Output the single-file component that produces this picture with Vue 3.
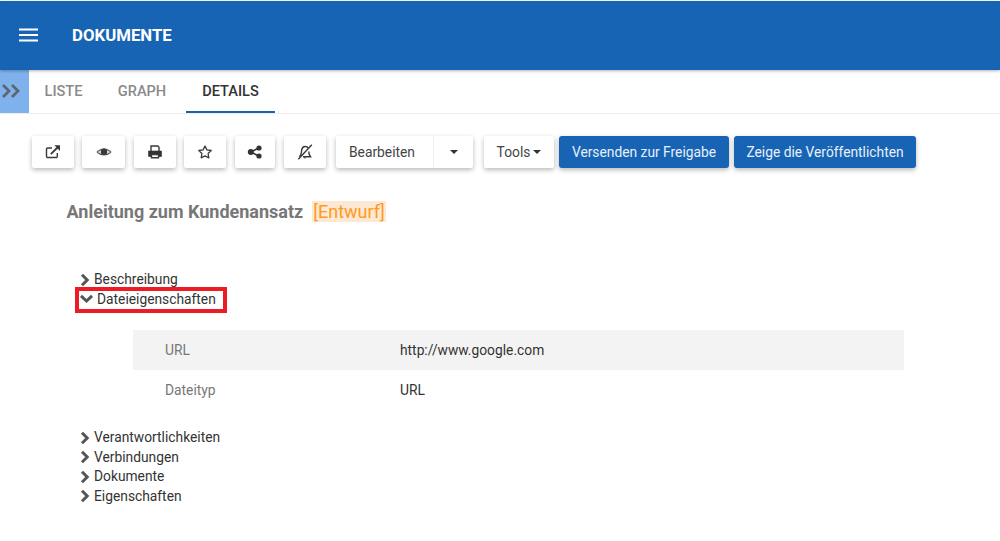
<template>
  <div class="page">
    <header class="appbar">
      <svg class="menu" width="20" height="14" viewBox="0 0 20 14"><path d="M0 1.500h19M0 7h19M0 12.500h19" stroke="#fff" stroke-width="2" fill="none"/></svg>
      <span class="apptitle">DOKUMENTE</span>
    </header>
    <nav class="tabbar">
      <div class="toggle">
        <svg width="22" height="16" viewBox="0 0 22 16"><path d="M2 2l6 6-6 6M11 2l6 6-6 6" stroke="#5c6670" stroke-width="2.800" fill="none"/></svg>
      </div>
      <a class="tab">LISTE</a>
      <a class="tab">GRAPH</a>
      <a class="tab active">DETAILS</a>
    </nav>
    <section class="toolbar">
      <button v-for="b in iconButtons" :key="b.name" class="btn icon" :style="{ width: b.w + 'px', marginRight: b.m + 'px' }">
        <svg width="16" height="16" viewBox="0 0 16 16" v-html="b.svg"></svg>
      </button>
      <div class="split">
        <span class="split-main">Bearbeiten</span>
        <span class="split-caret"><i class="caret"></i></span>
      </div>
      <button class="btn tools">Tools<i class="caret small"></i></button>
      <button class="btn primary first">Versenden zur Freigabe</button>
      <button class="btn primary second">Zeige die Veröffentlichten</button>
    </section>
    <h1 class="doc-title">Anleitung zum Kundenansatz<span class="draft">[Entwurf]</span></h1>
    <section class="tree">
      <div class="node"><svg class="chev" width="12" height="14" viewBox="0 0 12 14"><path d="M3 1.800L8.200 7 3 12.200" class="cp"/></svg>Beschreibung</div>
      <div class="node open"><svg class="chev wide" width="15" height="12" viewBox="0 0 15 12"><path d="M2 2.800l5.500 5.200 5.500-5.200" class="cp"/></svg>Dateieigenschaften</div>
      <div class="props">
        <div class="prop shaded"><span class="key">URL</span><span class="val">http://www.google.com</span></div>
        <div class="prop"><span class="key">Dateityp</span><span class="val">URL</span></div>
      </div>
      <div v-for="n in rest" :key="n" class="node"><svg class="chev" width="12" height="14" viewBox="0 0 12 14"><path d="M3 1.800L8.200 7 3 12.200" class="cp"/></svg>{{ n }}</div>
    </section>
  </div>
</template>

<script setup>
const S = 'fill="none" stroke="#3a3a3a" stroke-width="1.400"'
const iconButtons = [
  { name: 'open', w: 42, m: 8, svg: `<path d="M12.300 9v3.300a1.200 1.200 0 0 1-1.200 1.200H2.700a1.200 1.200 0 0 1-1.200-1.200V5.200A1.200 1.200 0 0 1 2.700 4H7" ${S}/><path d="M5.800 10.200L13 3" fill="none" stroke="#3a3a3a" stroke-width="1.800"/><path d="M9.300 1.200H15V7z" fill="#3a3a3a"/>` },
  { name: 'eye', w: 43, m: 9, svg: `<path d="M.4 8C4.300 3.200 11.700 3.200 15.600 8 11.700 12.800 4.300 12.800.4 8z" fill="#555"/><path d="M1.800 8C5.200 5 10.800 5 14.200 8 10.800 11 5.200 11 1.800 8z" fill="#ddd"/><circle cx="8" cy="7.800" r="3.200" fill="#3a3a3a"/>` },
  { name: 'print', w: 42, m: 8, svg: `<path d="M4 7V2h6.800L12 3.200V7" ${S}/><path d="M1.500 7h13v5.500h-2.500V10H4v2.500H1.500z" fill="#333" stroke="#333" stroke-width=".6" stroke-linejoin="round"/><path d="M4.500 10.500h7v3.300h-7z" ${S}/>` },
  { name: 'star', w: 42, m: 9, svg: `<path d="M8 2l1.900 3.900 4.300.6-3.100 3 .7 4.300L8 11.800l-3.800 2 .7-4.300-3.100-3 4.300-.6z" fill="none" stroke="#3a3a3a" stroke-width="1.300" stroke-linejoin="round"/>` },
  { name: 'share', w: 40, m: 9, svg: `<path d="M11.800 4L4 8l7.800 4" fill="none" stroke="#333" stroke-width="1.600"/><circle cx="3.800" cy="8" r="3" fill="#333"/><circle cx="12" cy="4" r="2.600" fill="#333"/><circle cx="12" cy="12" r="2.600" fill="#333"/>` },
  { name: 'mute', w: 42, m: 10, svg: `<path d="M2.500 12.800C4 11 4.500 9.500 4.500 7.500 4.500 4.300 6.200 2.500 8.300 2.500c1.300 0 2.400.6 3 1.700M11.800 7.500c0 2.200.4 3.700 1.700 5.300H6" ${S}/><path d="M1.300 15.300L14.800.8" ${S}/><path d="M6.600 13.600a1.500 1.500 0 0 0 2.800 0z" fill="#3a3a3a"/>` }
]
const rest = ['Verantwortlichkeiten', 'Verbindungen', 'Dokumente', 'Eigenschaften']
</script>

<style>
html, body { margin: 0; background: #fff; }
</style>

<style scoped>
.page { width: 1000px; height: 541px; overflow: hidden; font-family: Roboto, sans-serif; font-size: 13.800px; color: #333; background: #fff; padding-top: 1px; box-sizing: border-box; }
.appbar { height: 69px; background: #1864b4; display: flex; align-items: center; padding: 0 0 1px 19px; box-sizing: border-box; box-shadow: 0 1px 3px rgba(0,0,0,.3); position: relative; }
.menu { margin-right: 33px; }
.apptitle { color: #fff; font-size: 16.800px; font-weight: 700; }
.tabbar { height: 43px; display: flex; border-bottom: 1px solid #eee; }
.toggle { width: 29px; height: 43px; background: #7fb2ec; display: flex; align-items: center; justify-content: center; box-sizing: border-box; padding: 0 5px 2px 0; }
.tab { display: flex; align-items: center; justify-content: center; color: #8a8a8a; font-size: 14.600px; font-weight: 500; height: 43px; box-sizing: border-box; padding: 0 0 2px; }
.tab:nth-of-type(1) { width: 69px; margin-right: 4px; }
.tab:nth-of-type(2) { width: 80px; margin-right: 4px; }
.tab.active { width: 89px; color: #333; border-bottom: 2px solid #1864b4; padding: 0; }
.toolbar { display: flex; align-items: center; padding: 22px 0 0 32px; }
.btn { height: 32px; border: 0; background: #fff; border-radius: 2px; box-shadow: 0 2px 5px rgba(0,0,0,.28); font-family: inherit; font-size: 13.800px; color: #444; padding: 0; display: flex; align-items: center; justify-content: center; }
.split { width: 137px; height: 32px; display: flex; box-shadow: 0 2px 5px rgba(0,0,0,.28); border-radius: 2px; margin-right: 11px; color: #444; background: #fff; }
.split-main { width: 98px; box-sizing: border-box; border-right: 1px solid #eee; display: flex; align-items: center; padding-left: 13px; }
.split-caret { flex: 1; display: flex; align-items: center; justify-content: center; }
.caret { display: block; width: 0; height: 0; border-left: 4px solid transparent; border-right: 4px solid transparent; border-top: 4px solid #333; }
.caret.small { margin-left: 3px; }
.tools { width: 70px; margin-right: 5px; }
.primary { background: #1864b4; color: #e8f0fa; border-radius: 3px; }
.first { width: 170px; margin-right: 5px; }
.second { width: 182px; }
.doc-title { margin: 32px 0 0 66.500px; font-size: 18px; font-weight: 700; color: #777; line-height: 23px; display: flex; align-items: center; }
.draft { margin-left: 9px; padding: 0 1px; height: 21px; line-height: 21px; font-weight: 400; color: #ff9a1f; background: #fde8d4; }
.tree { margin-top: 47px; padding-left: 80px; }
.node { height: 19.500px; line-height: 19.500px; display: flex; align-items: center; color: #333; }
.chev { margin-right: 3px; flex: none; margin-left: -1px; }
.chev.wide { margin-right: 3px; margin-left: -1px; }
.cp { fill: none; stroke: #555; stroke-width: 3; }
.open { position: relative; }
.open::after { content: ""; position: absolute; left: -5px; top: -3px; width: 152px; height: 26px; box-sizing: border-box; border: 4px solid #ed1c24; }
.props { margin: 21px 0 18px 53px; width: 771px; }
.prop { height: 40px; display: flex; align-items: center; }
.shaded { background: #f3f3f3; }
.key { width: 267px; padding-left: 32px; box-sizing: border-box; color: #777; }
.val { color: #333; }
</style>
